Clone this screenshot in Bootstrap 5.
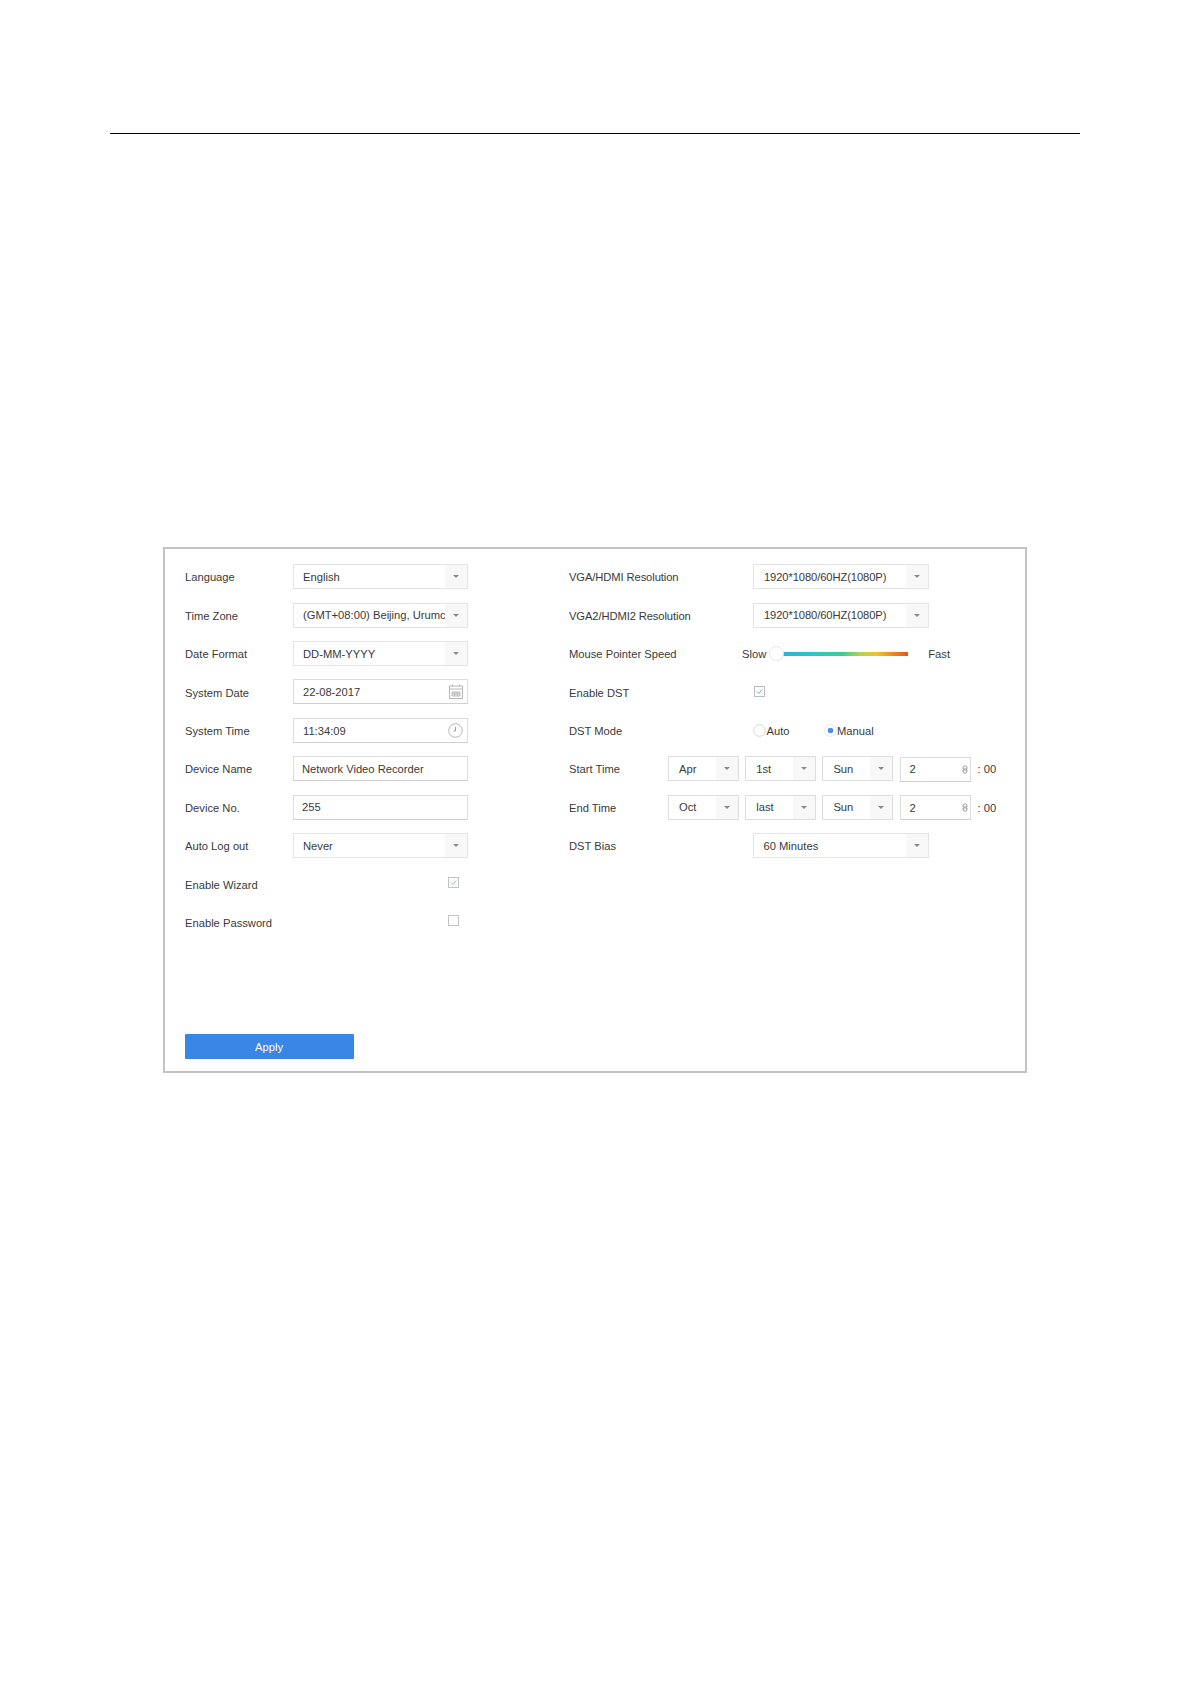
<!DOCTYPE html>
<html lang="en">
<head>
<meta charset="utf-8">
<title>General Settings</title>
<link href="https://cdn.jsdelivr.net/npm/bootstrap@5.3.0/dist/css/bootstrap.min.css" rel="stylesheet">
<style>
body{background:#fff;font-family:"Liberation Sans",Arial,sans-serif;font-size:11.2px;color:#3a3a3a;line-height:1.2}
.sheet{padding:133px 111px 0 110px;height:1684px}
.rule-line{border-top:1px solid #000;height:0}
.panel-box{margin:413px 53px 0 53px;height:526px;border:2px solid #c3c3c3;padding:9px 0 0 20px;display:flex;flex-direction:column}
.cols{flex:1 1 auto}
.col-l{width:384px}
.set-row{height:38.4px;display:flex;align-items:center}
.lbl-l,.lbl-r,.lbl-s{flex:none;padding-top:2px}
.lbl-l{width:108px}
.lbl-r{width:184px}
.lbl-s{width:99px}
.ctl{width:175px;height:25px;border:1px solid #e4e4e4;background:#fff;display:flex;align-items:center;flex:none;margin-top:-1px}
.ctl.wide{width:176px}
.ctl.plain{border-color:#dcdcdc;border-bottom-color:#cfcfcf}
.ctl-text{flex:1 1 0;min-width:0;padding:2px 0 0 9px;white-space:nowrap;overflow:hidden}
.ctl.plain .ctl-text{padding-left:8px}
.ctl.plain .ctl-text.stamp{padding-left:9px}
.ctl-text.res{padding-left:10px;letter-spacing:-.1px}
.ctl-text.bias{padding-left:9.5px}
.caps{letter-spacing:-.1px}
.drop{width:22px;height:100%;background:#f8f8f8;flex:none;display:flex;align-items:center;justify-content:center}
.drop i{display:block;width:0;height:0;border-left:3px solid transparent;border-right:3px solid transparent;border-top:3px solid #8a8a8a}
.ctl svg{flex:none;margin-right:4px}
.mini{width:71px;margin-right:6.2px;border-color:#dedede}
.mini .ctl-text{padding-left:10px}
.mini.plain .ctl-text{padding-left:9px}
.mini svg{margin-right:2px}
.end-l{width:175px;flex:none;display:flex;justify-content:flex-end;padding-right:9px;margin-top:-4px}
.tick{display:block;width:11px;height:11px;flex:none}
.tick.dst{margin:-1px 0 0 1px}
.slider-wrap{margin-left:-11px;display:flex;align-items:center;padding-top:2px}
.track{width:125px;height:4px;margin:-2px 0 0 13px;background:linear-gradient(90deg,#2bb4d2 0%,#2bc6c0 25%,#3ccf8e 48%,#b6d24c 62%,#f3c02f 75%,#ef7d22 90%,#e8541c 100%);position:relative}
.thumb{position:absolute;left:-14px;top:-6px;width:15px;height:15px;border-radius:50%;background:#fff;border:1px solid #e6e6e6}
.radio-l{display:flex;align-items:center;width:70.500px;padding-top:1px}
.radio-l svg{margin:-1px .5px 0 0;flex:none}
.btn-apply{width:169px;height:25px;padding:1px 1px 0 0;border:0;border-radius:1px;background:#3a86e6;color:#fff;font-size:11.2px;line-height:24px}
.btn-apply:hover{background:#3a86e6;color:#fff}
.colon{margin-left:7px;white-space:nowrap;padding-top:2px}
.slider-wrap .colon{padding-top:0}
.bottom-bar{padding-bottom:12px}
</style>
</head>
<body>
<div class="sheet">
  <div class="rule-line"></div>
  <div class="panel-box">
    <div class="cols d-flex">
      <div class="col-l">
        <div class="set-row"><div class="lbl-l">Language</div><div class="ctl"><div class="ctl-text">English</div><div class="drop"><i></i></div></div></div>
        <div class="set-row"><div class="lbl-l">Time Zone</div><div class="ctl"><div class="ctl-text">(GMT+08:00) Beijing, Urumc</div><div class="drop"><i></i></div></div></div>
        <div class="set-row"><div class="lbl-l">Date Format</div><div class="ctl"><div class="ctl-text">DD-MM-YYYY</div><div class="drop"><i></i></div></div></div>
        <div class="set-row"><div class="lbl-l">System Date</div><div class="ctl plain"><div class="ctl-text stamp">22-08-2017</div>
          <svg width="14" height="15" viewBox="0 0 14 15" fill="none" stroke="#a5a5a5" stroke-width=".8"><rect x=".5" y="2" width="13" height="12.5"/><path d="M3.5 .5v2M10.500 .5v2M.5 5h13M3 8h8v4H3zM5.700 8v4M8.300 8v4M3 10h8"/></svg></div></div>
        <div class="set-row"><div class="lbl-l">System Time</div><div class="ctl plain"><div class="ctl-text stamp">11:34:09</div>
          <svg width="15" height="15" viewBox="0 0 15 15" fill="none" stroke="#a5a5a5" stroke-width=".8"><circle cx="7.500" cy="7.500" r="6.800"/><path d="M7.500 4v4M5.500 8h2" stroke="#888"/></svg></div></div>
        <div class="set-row"><div class="lbl-l">Device Name</div><div class="ctl plain"><div class="ctl-text">Network Video Recorder</div></div></div>
        <div class="set-row"><div class="lbl-l">Device No.</div><div class="ctl plain"><div class="ctl-text">255</div></div></div>
        <div class="set-row"><div class="lbl-l">Auto Log out</div><div class="ctl"><div class="ctl-text">Never</div><div class="drop"><i></i></div></div></div>
        <div class="set-row"><div class="lbl-l">Enable Wizard</div><div class="end-l"><svg class="tick" viewBox="0 0 11 11" fill="none"><rect x=".5" y=".5" width="10" height="10" fill="#fafafa" stroke="#c4c4c4"/><path d="M3 5.500l1.800 2L8.200 3.500" stroke="#9db4cf" stroke-width=".8"/></svg></div></div>
        <div class="set-row"><div class="lbl-l">Enable Password</div><div class="end-l"><svg class="tick" viewBox="0 0 11 11" fill="none"><rect x=".5" y=".5" width="10" height="10" stroke="#c4c4c4"/></svg></div></div>
      </div>
      <div class="flex-grow-1">
        <div class="set-row"><div class="lbl-r caps">VGA/HDMI Resolution</div><div class="ctl wide"><div class="ctl-text res">1920*1080/60HZ(1080P)</div><div class="drop"><i></i></div></div></div>
        <div class="set-row"><div class="lbl-r caps">VGA2/HDMI2 Resolution</div><div class="ctl wide"><div class="ctl-text res">1920*1080/60HZ(1080P)</div><div class="drop"><i></i></div></div></div>
        <div class="set-row"><div class="lbl-r">Mouse Pointer Speed</div>
          <div class="slider-wrap"><span class="pe-1">Slow</span><div class="track"><div class="thumb"></div></div><span class="colon ms-3 ps-1">Fast</span></div></div>
        <div class="set-row"><div class="lbl-r">Enable DST</div><svg class="tick dst" viewBox="0 0 11 11" fill="none"><rect x=".5" y=".5" width="10" height="10" fill="#fafafa" stroke="#bdbdbd"/><path d="M3 5.500l1.800 2L8.200 3.500" stroke="#5a9be0" stroke-width=".8"/></svg></div>
        <div class="set-row"><div class="lbl-r">DST Mode</div>
          <label class="radio-l"><svg width="13" height="13" viewBox="0 0 13 13" fill="none"><circle cx="6.500" cy="6.500" r="5.800" stroke="#d4d4d4" stroke-width=".9"/></svg>Auto</label>
          <label class="radio-l"><svg width="13" height="13" viewBox="0 0 13 13" fill="none"><circle cx="6.500" cy="6.500" r="5.800" stroke="#e2e2e2" stroke-width=".9"/><circle cx="6.500" cy="6.500" r="2.800" fill="#4a8fe8"/></svg>Manual</label></div>
        <div class="set-row"><div class="lbl-s">Start Time</div>
          <div class="ctl mini"><div class="ctl-text">Apr</div><div class="drop"><i></i></div></div>
          <div class="ctl mini"><div class="ctl-text">1st</div><div class="drop"><i></i></div></div>
          <div class="ctl mini"><div class="ctl-text">Sun</div><div class="drop"><i></i></div></div>
          <div class="ctl mini plain m-0"><div class="ctl-text">2</div><svg width="6" height="9" viewBox="0 0 6 9" fill="none" stroke="#888" stroke-width=".8"><path d="M1 4V2l2-1.300 2 1.300v2zM1 5v2l2 1.300 2-1.300V5z"/></svg></div><span class="colon">: 00</span></div>
        <div class="set-row"><div class="lbl-s">End Time</div>
          <div class="ctl mini"><div class="ctl-text">Oct</div><div class="drop"><i></i></div></div>
          <div class="ctl mini"><div class="ctl-text">last</div><div class="drop"><i></i></div></div>
          <div class="ctl mini"><div class="ctl-text">Sun</div><div class="drop"><i></i></div></div>
          <div class="ctl mini plain m-0"><div class="ctl-text">2</div><svg width="6" height="9" viewBox="0 0 6 9" fill="none" stroke="#888" stroke-width=".8"><path d="M1 4V2l2-1.300 2 1.300v2zM1 5v2l2 1.300 2-1.300V5z"/></svg></div><span class="colon">: 00</span></div>
        <div class="set-row"><div class="lbl-r">DST Bias</div><div class="ctl wide"><div class="ctl-text bias">60 Minutes</div><div class="drop"><i></i></div></div></div>
      </div>
    </div>
    <div class="bottom-bar"><button type="button" class="btn btn-apply">Apply</button></div>
  </div>
</div>
<script src="https://cdn.jsdelivr.net/npm/bootstrap@5.3.0/dist/js/bootstrap.bundle.min.js"></script>
</body>
</html>
